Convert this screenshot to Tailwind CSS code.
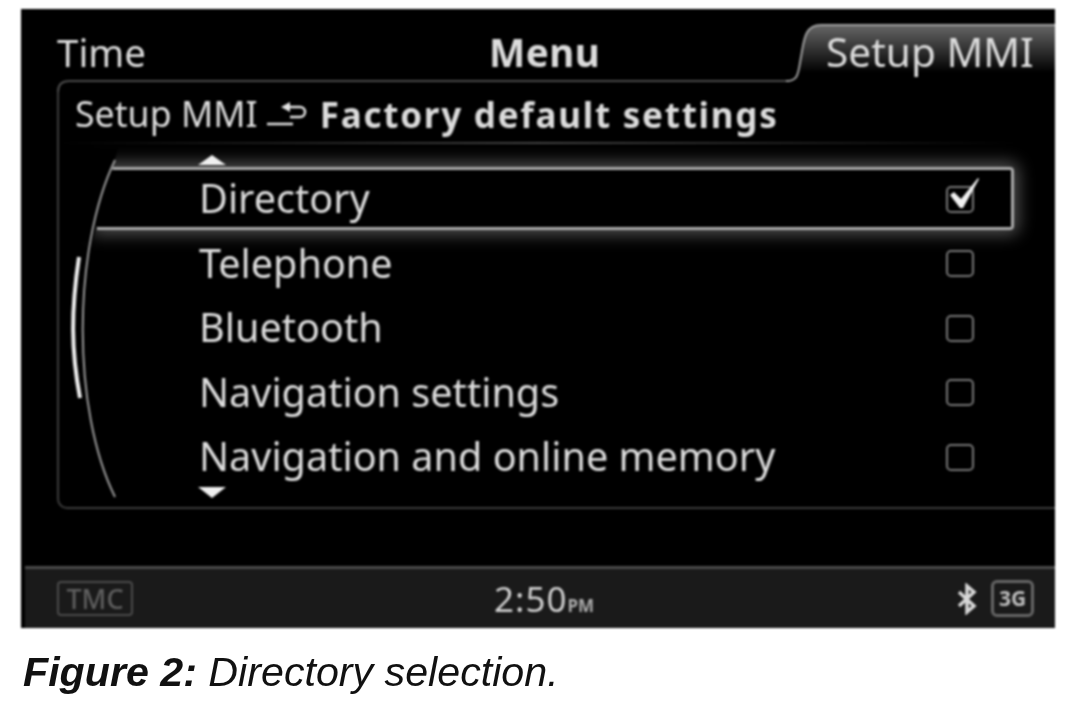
<!DOCTYPE html>
<html lang="en">

<head>
    <meta charset="UTF-8">
    <meta name="viewport" content="width=device-width, initial-scale=1.0">
    <title>Figure 2: Directory selection</title>
    <script src="https://cdn.jsdelivr.net/npm/@tailwindcss/browser@4"></script>
</head>

<body class="bg-white">
    <div class="relative w-[1077px] h-[721px] overflow-hidden bg-white font-['Noto_Sans',sans-serif]">

        <!-- screen -->
        <div class="absolute left-[21px] top-[9px] w-[1034px] h-[619px] bg-black flex flex-col text-[#dcdcdc] blur-[1px]">

            <!-- tabs -->
            <header class="relative z-10 h-[72px] shrink-0 flex items-center pl-[36px] pt-[14px] text-[38.5px] leading-none">
                <span class="w-[432px]">Time</span>
                <span class="font-bold w-[337px] tracking-[0.5px]">Menu</span>
                <span class="text-[40.6px]">Setup MMI</span>
            </header>

            <!-- panel -->
            <section class="relative h-[428px] shrink-0 ml-[36px] border-l-2 border-b-2 border-[#3c3c3c] rounded-l-[10px]">
                <div class="relative z-10 h-[61px] flex items-center pl-[16px] pt-[5px] text-[35.7px] leading-none">
                    <span>Setup MMI</span>
                    <svg class="w-[41px] h-[26px] ml-[8px] mr-[13px]" viewBox="0 0 41 26" fill="none" stroke="#e6e6e6" stroke-width="2.5">
                        <path d="M1 23H27" />
                        <path d="M24 6H34a5 5 0 0 1 0 10H24" />
                        <path d="M24 1L15 6l9 5z" fill="#e6e6e6" stroke="none" />
                    </svg>
                    <span class="font-bold text-[35px] tracking-[1.75px]">Factory default settings</span>
                </div>
                <div class="h-[2px] mr-[38px] bg-gradient-to-r from-transparent via-[#444444] to-transparent"></div>

                <ul class="relative mt-[23px] text-[39.6px] leading-none">
                    <li class="relative h-[64.5px] flex items-center pl-[140px]">
                        <div class="absolute left-[38px] right-[41px] top-0 h-[63px] border-y-[3px] border-r-[3px] border-[#aaaaaa] rounded-r shadow-[0_0_16px_5px_rgba(255,255,255,0.3)]"></div>
                        <span class="relative">Directory</span>
                        <span class="relative ml-auto mr-[81px] w-[28px] h-[27px] border-2 border-[#777] rounded-[5px]">
                            <svg class="absolute -left-[2px] -top-[10px] w-[36px] h-[38px]" viewBox="0 0 36 38">
                                <path d="M4 17l4-3 7 7L32 0l1 1L17 30h-3z" fill="#f2f2f2" />
                            </svg>
                        </span>
                    </li>
                    <li class="relative h-[64.5px] flex items-center pl-[140px]">
                        <span>Telephone</span>
                        <span class="ml-auto mr-[81px] w-[28px] h-[27px] border-2 border-[#777] rounded-[5px]"></span>
                    </li>
                    <li class="relative h-[64.5px] flex items-center pl-[140px]">
                        <span>Bluetooth</span>
                        <span class="ml-auto mr-[81px] w-[28px] h-[27px] border-2 border-[#777] rounded-[5px]"></span>
                    </li>
                    <li class="relative h-[64.5px] flex items-center pl-[140px]">
                        <span>Navigation settings</span>
                        <span class="ml-auto mr-[81px] w-[28px] h-[27px] border-2 border-[#777] rounded-[5px]"></span>
                    </li>
                    <li class="relative h-[64.5px] flex items-center pl-[140px]">
                        <span>Navigation and online memory</span>
                        <span class="ml-auto mr-[81px] w-[28px] h-[27px] border-2 border-[#777] rounded-[5px]"></span>
                    </li>
                </ul>
            </section>

            <!-- status bar -->
            <footer class="mt-auto ml-[4px] h-[62px] shrink-0 relative z-10 bg-[#1a1a1a] border-t-[3px] border-[#4a4a4a] flex items-center pl-[32px] pr-[21px]">
                <span class="w-[76px] h-[35px] border-2 border-[#4a4a4a] rounded flex items-center justify-center text-[27px] font-medium leading-none text-[#5e5e5e]">TMC</span>
                <span class="ml-[361px] text-[35px] leading-none tracking-[1px] text-[#cfcfcf]">2:50<span class="text-[17px] font-bold text-[#aaaaaa] tracking-normal">PM</span></span>
                <svg class="ml-auto w-[20px] h-[32px]" viewBox="0 0 20 32" fill="none" stroke="#d8d8d8" stroke-width="3.5">
                    <path d="M2 9l15 14-7 6V3l7 6L2 23" />
                </svg>
                <span class="ml-[14px] w-[43px] h-[37px] border-[3px] border-[#666] rounded-md flex items-center justify-center text-[21px] font-bold leading-none text-[#bdbdbd]">3G</span>
            </footer>

            <!-- tab outline, scroll arc and arrows, in screen coordinates -->
            <svg class="absolute inset-0 w-[1034px] h-[619px] pointer-events-none" viewBox="21 9 1034 619" fill="none">
                <defs>
                    <linearGradient id="tabFill" x1="0" y1="0" x2="0" y2="1">
                        <stop offset="0" stop-color="#666666" />
                        <stop offset="0.85" stop-color="#000000" />
                    </linearGradient>
                </defs>
                <path d="M790 81c10 0 9-8 11-24s3-32 20-32H1055V81z" fill="url(#tabFill)" />
                <path d="M786 81c13 0 12-8 15-24s3-32 20-32H1055" stroke="#a0a0a0" stroke-width="2" />
                <path d="M58 92c0-7 4-11 11-11H786" stroke="#4a4a4a" stroke-width="2" />
                <path d="M70 148H118L104 200L92 242H70z" fill="#000000" />
                <path d="M115 160C72 250 72 410 115 497" stroke="#999999" stroke-width="2" />
                <path d="M79 257C71 310 71 350 80 398" stroke="#eeeeee" stroke-width="4" />
                <path d="M198 165L212 155L226 165z" fill="#f0f0f0" />
                <path d="M198 487L212 498L226 487z" fill="#f0f0f0" />
            </svg>
        </div>

        <!-- caption -->
        <p class="absolute left-[23px] top-[648px] font-['Liberation_Sans',sans-serif] italic text-[41.2px] leading-[48px] text-[#111111] blur-[0.6px]"><b>Figure 2:</b> Directory selection.</p>
    </div>
</body>

</html>
